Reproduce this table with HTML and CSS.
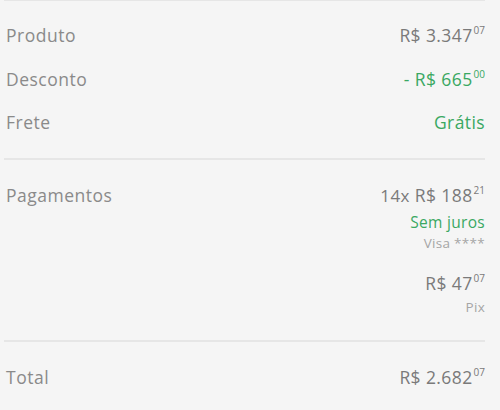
FILE: index.html
```html
<!DOCTYPE html>
<html lang="pt-BR">
<head>
<meta charset="utf-8">
<link rel="stylesheet" href="styles.css">
</head>
<body>
<div class="summary">
  <section class="block first">
    <div class="row">
      <span class="label">Produto</span>
      <span class="value">R$ 3.347<sup class="cents">07</sup></span>
    </div>
    <div class="row">
      <span class="label">Desconto</span>
      <span class="value green">- R$ 665<sup class="cents">00</sup></span>
    </div>
    <div class="row">
      <span class="label">Frete</span>
      <span class="value green">Grátis</span>
    </div>
  </section>
  <section class="block pay">
    <div class="row top">
      <span class="label">Pagamentos</span>
      <div class="methods">
        <div class="method">
          <span class="value"><span class="times">14x</span> R$ 188<sup class="cents">21</sup></span>
          <span class="note green">Sem juros</span>
          <span class="sub">Visa ****</span>
        </div>
        <div class="method">
          <span class="value">R$ 47<sup class="cents">07</sup></span>
          <span class="sub pix">Pix</span>
        </div>
      </div>
    </div>
  </section>
  <section class="block total">
    <div class="row">
      <span class="label">Total</span>
      <span class="value">R$ 2.682<sup class="cents">07</sup></span>
    </div>
  </section>
</div>
</body>
</html>
```

FILE: styles.css
```css
html, body {
  margin: 0;
  padding: 0;
  background: #f5f5f5;
}
body {
  font-family: "Open Sans", "Liberation Sans", sans-serif;
  color: #8c8c8c;
}
.summary {
  width: 481px;
  margin-left: 4px;
}
.block {
  border-top: 2px solid #e6e6e6;
  padding: 0 0 0 2px;
}
.first {
  border-top-width: 1px;
  padding-top: 23px;
  padding-bottom: 25px;
  display: flex;
  flex-direction: column;
  gap: 21.5px;
}
.row {
  display: flex;
  justify-content: space-between;
  align-items: center;
  height: 22px;
}
.row.top {
  align-items: flex-start;
  height: auto;
}
.label {
  font-size: 17.5px;
  line-height: 22px;
  letter-spacing: 0.5px;
  color: #8a8a8a;
}
.value {
  font-size: 17.5px;
  line-height: 22px;
  letter-spacing: 0.4px;
  color: #7a7a7a;
  white-space: nowrap;
}
.green {
  color: #3aa862;
}
.cents {
  font-size: 10px;
  letter-spacing: 0;
  vertical-align: top;
  line-height: 12px;
  position: relative;
  top: 0;
  margin-left: 1px;
}
.times {
  font-size: 17px;
}
.pay {
  padding-top: 24px;
  padding-bottom: 25px;
}
.methods {
  display: flex;
  flex-direction: column;
  gap: 21px;
}
.method {
  display: flex;
  flex-direction: column;
  align-items: flex-end;
}
.note {
  font-size: 15.5px;
  line-height: 20px;
  letter-spacing: 0.3px;
  margin-top: 5px;
}
.sub {
  font-size: 13.5px;
  line-height: 16px;
  letter-spacing: 0.3px;
  margin-top: 3px;
  color: #a5a5a5;
}
.sub.pix {
  margin-top: 5px;
}
.total {
  padding-top: 24px;
}
```
